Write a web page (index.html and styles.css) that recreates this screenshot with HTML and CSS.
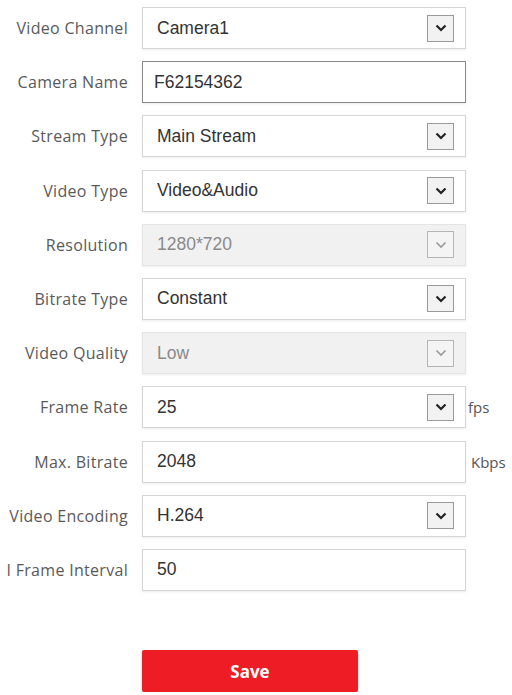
FILE: index.html
```html
<!DOCTYPE html>
<html lang="en">
<head>
  <meta charset="UTF-8" />
  <meta name="viewport" content="width=device-width, initial-scale=1.0"/>
  <title>Video Settings</title>
  <link rel="stylesheet" href="styles.css">
</head>
<body>
  <div class="form">
    <div class="row">
      <div class="label">Video Channel</div>
      <div class="field select"><span class="value">Camera1</span><span class="arrow"><svg viewBox="0 0 12 8" width="12" height="8"><path d="M1.5 1.5 L6 6 L10.5 1.5" /></svg></span></div>
    </div>
    <div class="row">
      <div class="label">Camera Name</div>
      <div class="field focus"><span class="value">F62154362</span></div>
    </div>
    <div class="row">
      <div class="label">Stream Type</div>
      <div class="field select"><span class="value">Main Stream</span><span class="arrow"><svg viewBox="0 0 12 8" width="12" height="8"><path d="M1.5 1.5 L6 6 L10.5 1.5" /></svg></span></div>
    </div>
    <div class="row">
      <div class="label">Video Type</div>
      <div class="field select"><span class="value">Video&amp;Audio</span><span class="arrow"><svg viewBox="0 0 12 8" width="12" height="8"><path d="M1.5 1.5 L6 6 L10.5 1.5" /></svg></span></div>
    </div>
    <div class="row">
      <div class="label">Resolution</div>
      <div class="field select disabled"><span class="value">1280*720</span><span class="arrow"><svg viewBox="0 0 12 8" width="12" height="8"><path d="M1.5 1.5 L6 6 L10.5 1.5" /></svg></span></div>
    </div>
    <div class="row">
      <div class="label">Bitrate Type</div>
      <div class="field select"><span class="value">Constant</span><span class="arrow"><svg viewBox="0 0 12 8" width="12" height="8"><path d="M1.5 1.5 L6 6 L10.5 1.5" /></svg></span></div>
    </div>
    <div class="row">
      <div class="label">Video Quality</div>
      <div class="field select disabled"><span class="value">Low</span><span class="arrow"><svg viewBox="0 0 12 8" width="12" height="8"><path d="M1.5 1.5 L6 6 L10.5 1.5" /></svg></span></div>
    </div>
    <div class="row">
      <div class="label">Frame Rate</div>
      <div class="field select"><span class="value">25</span><span class="arrow"><svg viewBox="0 0 12 8" width="12" height="8"><path d="M1.5 1.5 L6 6 L10.5 1.5" /></svg></span></div>
      <div class="unit">fps</div>
    </div>
    <div class="row">
      <div class="label">Max. Bitrate</div>
      <div class="field"><span class="value">2048</span></div>
      <div class="unit kbps">Kbps</div>
    </div>
    <div class="row">
      <div class="label">Video Encoding</div>
      <div class="field select"><span class="value">H.264</span><span class="arrow"><svg viewBox="0 0 12 8" width="12" height="8"><path d="M1.5 1.5 L6 6 L10.5 1.5" /></svg></span></div>
    </div>
    <div class="row">
      <div class="label">I Frame Interval</div>
      <div class="field"><span class="value">50</span></div>
    </div>
    <div class="actions">
      <button class="save-btn">Save</button>
    </div>
  </div>
</body>
</html>
```

FILE: styles.css
```css
* {
  box-sizing: border-box;
}

body {
  margin: 0;
  padding: 0;
  background: #fff;
  font-family: 'Open Sans', 'Liberation Sans', sans-serif;
}

.form {
  display: flex;
  flex-direction: column;
  gap: 12.2px;
  padding-top: 7px;
}

.row {
  display: flex;
  align-items: center;
  height: 42px;
}

.label {
  width: 128px;
  text-align: right;
  font-size: 16px;
  letter-spacing: 0.3px;
  color: #5a5a5a;
  white-space: nowrap;
  margin-right: 14px;
}

.field {
  width: 324px;
  height: 42px;
  display: flex;
  align-items: center;
  justify-content: space-between;
  border: 1px solid #d6d6d6;
  background: #fff;
  box-shadow: 0 1px 2px rgba(0,0,0,0.08);
  padding: 0 11px 0 14px;
}

.field.focus {
  border: 1px solid #8a8a8a;
  padding-left: 11px;
}

.field.disabled {
  background: #f1f1f1;
  border-color: #e4e4e4;
}

.value {
  font-family: 'Liberation Sans', Arial, sans-serif;
  font-size: 17.5px;
  color: #333;
}

.disabled .value {
  color: #8a8a8a;
}

.arrow {
  width: 27px;
  height: 27px;
  border: 1px solid #9a9a9a;
  background: #f2f2f2;
  display: flex;
  align-items: center;
  justify-content: center;
}

.arrow path {
  fill: none;
  stroke: #222;
  stroke-width: 2.2;
}

.disabled .arrow {
  border-color: #b5b5b5;
  background: #f4f4f4;
}

.disabled .arrow path {
  stroke: #999;
  stroke-width: 1.6;
}

.unit {
  font-size: 15px;
  color: #555;
  margin-left: 2px;
}

.unit.kbps {
  margin-left: 5px;
}

.actions {
  padding: 47px 0 0 142px;
}

.save-btn {
  width: 216px;
  height: 42px;
  border: none;
  border-radius: 2px;
  background: #ee1c25;
  color: #fff;
  font-family: 'Open Sans', 'Liberation Sans', sans-serif;
  font-weight: bold;
  font-size: 17px;
  box-shadow: 0 1px 3px rgba(0,0,0,0.2);
  cursor: pointer;
}
```
